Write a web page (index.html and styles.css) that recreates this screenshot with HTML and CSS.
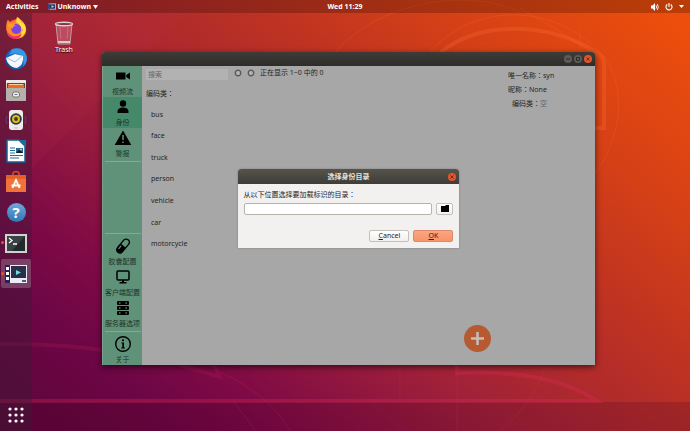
FILE: index.html
```html
<!DOCTYPE html>
<html lang="en">
  <head>
    <meta charset="UTF-8" />
    <meta name="viewport" content="width=device-width, initial-scale=1.0" />
    <title>Unknown</title>
    <link rel="stylesheet" href="styles.css" />
  </head>
  <body>
    <!-- Wallpaper -->
    <svg class="wallpaper" viewBox="0 0 690 431" preserveAspectRatio="none" aria-hidden="true">
      <defs>
        <linearGradient id="base" gradientUnits="userSpaceOnUse" x1="0" y1="431" x2="500" y2="-160">
          <stop offset="0" stop-color="#5a0538" />
          <stop offset="0.15" stop-color="#6d0645" />
          <stop offset="0.24" stop-color="#7e0a46" />
          <stop offset="0.42" stop-color="#a02139" />
          <stop offset="0.63" stop-color="#bd3222" />
          <stop offset="0.78" stop-color="#d54016" />
          <stop offset="1" stop-color="#f0500a" />
        </linearGradient>
      </defs>
      <rect width="690" height="431" fill="url(#base)" />
      <path d="M32 168L185 13H32z" fill="#c0304a" opacity="0.12" />
      <rect y="402" width="690" height="29" fill="#40001c" opacity="0.2" />
      <g fill="none" stroke="#ff7a3a">
        <path d="M441 52C478 22 545 20 598 53Q604 56 604 64V128H595" stroke-width="4" opacity="0.24" />
        <path d="M336 52C380 0 470-12 520 12M430 52C470 5 550 0 600 52C628 82 624 140 590 180M520 8Q560 30 600 58M580 30V52" opacity="0.18" />
      </g>
      <g fill="none" stroke="#e02c58">
        <path d="M0 401H597C560 376 510 371 457 373V365" stroke-width="4" opacity="0.3" />
        <path d="M0 344Q60 344 102 350M180 365L220 377L214 365" stroke-width="4" opacity="0.15" />
        <path d="M220 372Q270 395 290 431M234 402L256 431M546 367Q532 405 500 431M457 373V431M400 366V402" opacity="0.2" />
      </g>
    </svg>

    <header class="topbar">
      <div class="topbar-left">
        <button type="button">Activities</button>
        <button type="button" class="app-menu">
          <svg width="8" height="8" viewBox="0 0 9 8">
            <rect x="0.5" y="0.5" width="8" height="6" fill="#28395b" stroke="#b8c4de" />
            <path d="M0 0h2v7H0z" fill="#46437e" />
            <path d="M4 2l3 1.500-3 1.500z" fill="#9fdde6" />
          </svg>
          Unknown
          <svg width="5" height="4" viewBox="0 0 5 4"><path d="M0 0h5L2.500 4z" fill="#fff" /></svg>
        </button>
      </div>
      <button type="button">Wed 11:29</button>
      <div class="topbar-right">
        <button type="button" aria-label="System">
          <svg width="8" height="8" viewBox="0 0 8 8" fill="none" stroke="#fff">
            <path d="M0 2.500h1.500L4 0v8L1.500 5.500H0z" fill="#fff" stroke="none" />
            <path d="M5 2.300q1.200 1.700 0 3.400M6.300 1q2 3 0 6" stroke-width="0.9" />
          </svg>
          <svg width="8" height="8" viewBox="0 0 8 8" fill="none" stroke="#fff">
            <path d="M2.300 1.500a3 3 0 1 0 3.400 0M4 0v4" stroke-width="1.100" />
          </svg>
          <svg width="5" height="3" viewBox="0 0 5 3"><path d="M0 0h5L2.500 3z" fill="#fff" /></svg>
        </button>
      </div>
    </header>

    <div class="workspace">
      <nav class="dock">
        <div class="launchers">
          <button type="button" aria-label="Firefox">
            <svg width="24" height="24" viewBox="0 0 24 24">
              <circle cx="12" cy="13" r="9.800" fill="#ff4a3c" />
              <path d="M3 15Q1 8 4 3.500Q5 6 7 6.500Q12 5 13 1Q19 4 21.500 10Q24 17 18 21.500Q9 25 4 19z" fill="#ff8a25" />
              <path d="M13.500 1Q16 3 17.500 6Q22 8 21.800 14Q20.500 21 13 22Q19 18 17 12Q15 7 12 6z" fill="#ffe13c" />
              <path d="M2.500 14Q6 22 14 20Q20 17 18 12Q19 24 10 23Q4 22 2.500 14z" fill="#f22b72" />
              <circle cx="12.300" cy="13" r="5" fill="#7b44e0" />
              <path d="M4 8Q9 7 12 9.500Q9 10 9 12Q6 13 4 10z" fill="#ff9a22" />
            </svg>
          </button>
          <button type="button" aria-label="Thunderbird">
            <svg width="24" height="24" viewBox="0 0 24 24">
              <circle cx="12" cy="12" r="10.500" fill="#1764b5" />
              <path d="M8 2Q18-1 22 7Q25 14 19 20Q21 12 16 8Q12 5 5 8z" fill="#3398e6" />
              <path d="M2 11L11 7L19 9Q20 18 13 21Q4 21 2 11z" fill="#f4f7fb" />
              <path d="M3 11L11 15L18 9" fill="none" stroke="#a9bed5" />
              <path d="M2 14Q4 22 13 22Q5 19 2 14z" fill="#164b91" />
            </svg>
          </button>
          <button type="button" aria-label="Files">
            <svg width="24" height="24" viewBox="0 0 24 24">
              <rect x="2" y="2" width="20" height="21" rx="2" fill="#c9c7c3" />
              <rect x="2" y="2" width="20" height="4" rx="1" fill="#eceae6" />
              <path d="M3 5h18v6H3z" fill="#5a4c44" />
              <path d="M4 6h16v5H4z" fill="#ef6c27" />
              <path d="M5 6h14v1H5z" fill="#ffd0a6" />
              <rect x="2" y="10" width="20" height="13" rx="1" fill="#b4b1ad" />
              <rect x="8.500" y="14" width="7" height="5" rx="2" fill="#eee" stroke="#77736e" />
              <path d="M10.500 16.500h3" stroke="#777" />
            </svg>
          </button>
          <button type="button" aria-label="Rhythmbox">
            <svg width="24" height="24" viewBox="0 0 24 24">
              <path d="M3 8q-2 4 0 8M21 8q2 4 0 8" fill="none" stroke="#5866a9" stroke-opacity="0.5" />
              <rect x="5" y="2" width="14" height="20" rx="3" fill="#ececea" />
              <circle cx="12" cy="11" r="5.800" fill="#31343b" />
              <circle cx="12" cy="11" r="4" fill="#d7bc22" />
              <circle cx="12" cy="11" r="1.900" fill="#3c3b2c" />
              <path d="M10 20h4" stroke="#bbb" />
            </svg>
          </button>
          <button type="button" aria-label="LibreOffice Writer">
            <svg width="24" height="24" viewBox="0 0 24 24">
              <path d="M3 1h12l6 6v16H3z" fill="#fff" stroke="#126294" stroke-width="1.500" />
              <path d="M15 1h7v7z" fill="#176fa5" />
              <path d="M6 9h5M6 11.500h5M6 14h5M6 16.500h13M6 19h9" stroke="#23709e" />
              <rect x="12" y="9" width="7" height="5" fill="#266d9b" />
              <path d="M12 14l3-3 2 1 2 2z" fill="#101b24" />
              <circle cx="17" cy="10.500" r="1" fill="#f7d355" />
            </svg>
          </button>
          <button type="button" aria-label="Ubuntu Software">
            <svg width="24" height="24" viewBox="0 0 24 24">
              <path d="M9 6V3q3-3 6 0v3" fill="none" stroke="#d25720" stroke-width="1.500" />
              <path d="M2 5h20v17H2z" fill="#ef7338" />
              <path d="M2 5h20v4H2z" fill="#e46029" />
              <path d="M8.500 18L12 10L15.500 18M7.500 15.500h9" fill="none" stroke="#fff" stroke-width="1.800" />
            </svg>
          </button>
          <button type="button" aria-label="Help" class="help-icon">?</button>
          <button type="button" aria-label="Terminal" class="running">
            <svg width="24" height="24" viewBox="0 0 24 24">
              <rect x="1" y="3" width="22" height="19" fill="#d2d1cf" />
              <rect x="3" y="5" width="18" height="15" fill="#22292b" />
              <path d="M3 5h18L8 20H3z" fill="#3b4244" />
              <path d="M5 7l3 2.500L5 12M9 13h4" fill="none" stroke="#fff" stroke-width="1.300" />
            </svg>
          </button>
          <button type="button" aria-label="Unknown" class="running active">
            <svg width="24" height="24" viewBox="0 0 24 24">
              <rect x="1" y="3" width="22" height="18" fill="#ececf4" />
              <rect x="1" y="3" width="5" height="18" fill="#2c1e5d" />
              <path d="M2 5h3v3H2zM2 10h3v3H2zM2 15h3v3H2z" fill="#fff" />
              <rect x="7" y="4" width="15" height="12" fill="#283146" />
              <path d="M12 8l5 2.500-5 2.500z" fill="#72dbe1" />
              <path d="M18 18h4v2h-4z" fill="#5b5296" />
            </svg>
          </button>
        </div>
        <button type="button" class="show-apps" aria-label="Show Applications">
          <svg width="16" height="16" viewBox="0 0 16 16" fill="#fff">
            <circle cx="2" cy="2" r="1.600" /><circle cx="8" cy="2" r="1.600" /><circle cx="14" cy="2" r="1.600" />
            <circle cx="2" cy="8" r="1.600" /><circle cx="8" cy="8" r="1.600" /><circle cx="14" cy="8" r="1.600" />
            <circle cx="2" cy="14" r="1.600" /><circle cx="8" cy="14" r="1.600" /><circle cx="14" cy="14" r="1.600" />
          </svg>
        </button>
      </nav>

      <main class="desktop">
        <button type="button" class="trash">
          <svg width="20" height="24" viewBox="0 0 20 24">
            <path d="M2 3h16l-2 20H4z" fill="#cd667c" fill-opacity="0.6" stroke="#b99da1" />
            <path d="M4 20h12v2H4z" fill="#d4ceca" />
            <ellipse cx="10" cy="3" rx="8.500" ry="1.800" fill="#8b3346" stroke="#d9d5d1" stroke-width="1.400" />
            <path d="M6 6l1 12M14 6l-1 12" stroke="#e29aa7" stroke-opacity="0.4" />
          </svg>
          Trash
        </button>

        <section class="window">
          <div class="titlebar">
            <button type="button" class="win-btn" aria-label="Minimize">
              <svg viewBox="0 0 8 8"><path d="M2 4h4" /></svg>
            </button>
            <button type="button" class="win-btn" aria-label="Maximize">
              <svg viewBox="0 0 8 8"><path d="M2.500 2.500h3v3h-3z" /></svg>
            </button>
            <button type="button" class="win-btn close" aria-label="Close">
              <svg viewBox="0 0 8 8"><path d="M2.500 2.500l3 3M5.500 2.500l-3 3" /></svg>
            </button>
          </div>

          <div class="window-body">
            <nav class="sidebar">
              <button type="button">
                <svg width="18" height="18" viewBox="0 0 18 18"><path d="M2 5.500h9.500v7H2zM12.300 8l3.700-2.500v7L12.300 10z" /></svg>
                视频流
              </button>
              <button type="button" class="selected">
                <svg width="18" height="18" viewBox="0 0 18 18"><circle cx="9" cy="5.500" r="3.200" /><path d="M3.500 15v-2q.5-3.500 5.500-3.500t5.500 3.500v2z" /></svg>
                身份
              </button>
              <button type="button">
                <svg width="18" height="18" viewBox="0 0 18 18"><path d="M9 1.500L17.300 16H.7z" /><path d="M9 6v5M9 12.500v1.500" stroke="#5f9279" stroke-width="1.500" /></svg>
                警报
              </button>
              <hr />
              <div class="spacer"></div>
              <hr />
              <button type="button">
                <svg width="18" height="18" viewBox="0 0 18 18"><g transform="rotate(40 9 9)"><rect x="5.800" y="1" width="6.400" height="16" rx="3.200" fill="none" stroke="#000" stroke-width="1.300" /><path d="M5.800 8.500h6.400V14a3.200 3.200 0 0 1-6.400 0z" /><path d="M7.500 10v4" stroke="#7ca390" /></g></svg>
                胶囊配置
              </button>
              <button type="button">
                <svg width="18" height="18" viewBox="0 0 18 18"><rect x="3" y="3" width="12" height="9" rx="1" fill="none" stroke="#000" stroke-width="1.500" /><path d="M8 12h2v2h2.500v1.500h-7V14H8z" /></svg>
                客户端配置
              </button>
              <button type="button">
                <svg width="18" height="18" viewBox="0 0 18 18"><rect x="3" y="2" width="12" height="4" rx="1" /><rect x="3" y="7" width="12" height="4" rx="1" /><rect x="3" y="12" width="12" height="4" rx="1" /><path d="M5 4h1.500M11.500 4H13M5 9h1.500M11.500 9H13M5 14h1.500M11.500 14H13" stroke="#8ab29e" /></svg>
                服务器选项
              </button>
              <hr />
              <button type="button">
                <svg width="18" height="18" viewBox="0 0 18 18"><circle cx="9" cy="9" r="7.300" fill="none" stroke="#000" stroke-width="1.400" /><circle cx="9" cy="5.300" r="1.100" /><path d="M7.500 7.500H10v5h1v1H7.300v-1h1v-4h-.8z" /></svg>
                关于
              </button>
            </nav>

            <aside class="filters">
              <input type="search" placeholder="搜索" aria-label="搜索" />
              <h2>编码类：</h2>
              <ul>
                <li>bus</li>
                <li>face</li>
                <li>truck</li>
                <li>person</li>
                <li>vehicle</li>
                <li>car</li>
                <li>motorcycle</li>
              </ul>
            </aside>

            <section class="results">
              <div class="pager">
                <button type="button" aria-label="上一页">
                  <svg width="8" height="8" viewBox="0 0 8 8"><circle cx="4" cy="4" r="2.800" fill="none" stroke="#555" stroke-width="1.200" /><path d="M5 2.500L3 4l2 1.500z" fill="#bbb" /></svg>
                </button>
                <button type="button" aria-label="下一页">
                  <svg width="8" height="8" viewBox="0 0 8 8"><circle cx="4" cy="4" r="2.800" fill="none" stroke="#555" stroke-width="1.200" /><path d="M3 2.500L5 4 3 5.500z" fill="#bbb" /></svg>
                </button>
                <span>正在显示 1~0 中的 0</span>
              </div>
              <button type="button" class="add" aria-label="添加">
                <svg width="27" height="27" viewBox="0 0 27 27"><path d="M13.500 7v13M7 13.500h13" stroke="#c4c0bc" stroke-width="2.500" /></svg>
              </button>
            </section>

            <aside class="details">
              <p>唯一名称：syn</p>
              <p>昵称：None</p>
              <p class="nested">编码类：<span>空</span></p>
            </aside>
          </div>

          <div class="overlay">
            <form class="dialog" role="dialog" aria-labelledby="dialogTitle">
              <div class="dialog-title">
                <h1 id="dialogTitle">选择身份目录</h1>
                <button type="button" class="win-btn close" aria-label="Close">
                  <svg viewBox="0 0 8 8"><path d="M2.500 2.500l3 3M5.500 2.500l-3 3" /></svg>
                </button>
              </div>
              <div class="dialog-body">
                <label for="directory">从以下位置选择要加载标识的目录：</label>
                <div class="path-row">
                  <input type="text" id="directory" name="directory" />
                  <button type="button" class="btn browse" aria-label="Browse">
                    <svg width="8" height="8" viewBox="0 0 8 8"><path d="M0 1h4l1-1h3v7H0z" /></svg>
                  </button>
                </div>
                <div class="actions">
                  <button type="button" class="btn"><span><u>C</u>ancel</span></button>
                  <button type="submit" class="btn primary"><span><u>O</u>K</span></button>
                </div>
              </div>
            </form>
          </div>
        </section>
      </main>
    </div>
  </body>
</html>
```

FILE: styles.css
```css
* {
  box-sizing: border-box;
}

body {
  margin: 0;
  min-height: 100vh;
  display: flex;
  flex-direction: column;
  font-family: "Noto Sans", "Noto Sans CJK JP", sans-serif;
  font-size: 7px;
  line-height: 10px;
  color: #262626;
  background: #78063f;
}

button,
input {
  font: inherit;
  color: inherit;
}

button {
  border: none;
  background: none;
  padding: 0;
}

svg {
  display: block;
  flex: none;
}

h1,
h2,
p,
ul {
  margin: 0;
  padding: 0;
  font-size: 7px;
}

.wallpaper {
  position: absolute;
  inset: 0;
  width: 100%;
  height: 100%;
  z-index: -1;
}

/* Top bar */
.topbar {
  height: 13px;
  padding: 0 6px;
  display: grid;
  grid-template-columns: 1fr auto 1fr;
  align-items: center;
  background: rgba(0, 0, 0, 0.22);
  color: #fff;
  font-weight: 700;
}

.topbar-left,
.topbar-right,
.topbar button {
  display: flex;
  align-items: center;
}

.topbar-left {
  gap: 9px;
}

.topbar .app-menu {
  gap: 2px;
}

.topbar-right {
  justify-content: flex-end;
}

.topbar-right button {
  gap: 6px;
}

.workspace {
  flex: 1;
  display: flex;
}

/* Dock */
.dock {
  width: 32px;
  display: flex;
  flex-direction: column;
  justify-content: space-between;
  background: rgba(55, 30, 55, 0.38);
}

.launchers {
  display: grid;
  grid-auto-rows: 1fr;
  height: 276px;
}

.launchers button {
  margin: 1px;
  display: flex;
  align-items: center;
  justify-content: center;
  border-radius: 2px;
}

.launchers .help-icon {
  width: 19px;
  height: 19px;
  place-self: center;
  border-radius: 50%;
  background: linear-gradient(#71a9da, #2f75b4);
  color: #fff;
  font-size: 15px;
  font-weight: 700;
}

.launchers .running {
  position: relative;
}

.launchers .running::before {
  content: "";
  position: absolute;
  left: 0;
  width: 3px;
  height: 3px;
  border-radius: 50%;
  background: #e95420;
}

.launchers .active {
  background: rgba(255, 255, 255, 0.2);
}

.show-apps {
  height: 32px;
  display: flex;
  align-items: center;
  justify-content: center;
}

/* Desktop */
.desktop {
  flex: 1;
  position: relative;
}

.trash {
  position: absolute;
  left: 20px;
  top: 8px;
  width: 24px;
  display: flex;
  flex-direction: column;
  align-items: center;
  color: #fff;
  text-shadow: 0 1px 1px #000;
}

.window {
  position: absolute;
  inset: 39px 95px 66px 70px;
  display: flex;
  flex-direction: column;
  border-radius: 3px 3px 0 0;
  background: #a7a7a7;
  box-shadow: 0 2px 6px rgba(0, 0, 0, 0.6);
}

.titlebar {
  height: 14px;
  padding: 0 3px;
  display: flex;
  align-items: center;
  justify-content: flex-end;
  gap: 2px;
  border-radius: 3px 3px 0 0;
  background: linear-gradient(#3d3c38, #2d2c29);
}

.win-btn {
  width: 8px;
  height: 8px;
  border-radius: 50%;
  background: #5c5b56;
}

.win-btn svg {
  fill: none;
  stroke: #2d2c29;
}

.win-btn.close {
  background: #e2552c;
}

.win-btn.close svg {
  stroke: #7a2a14;
}

.window-body {
  flex: 1;
  display: flex;
}

/* Sidebar */
.sidebar {
  width: 40px;
  display: flex;
  flex-direction: column;
  background: #5f9279;
  border-left: 1px solid #78a08c;
}

.sidebar button {
  height: 31px;
  display: flex;
  flex-direction: column;
  align-items: center;
  justify-content: space-between;
  padding: 1px 0 0;
  color: #1f3329;
  white-space: nowrap;
}

.sidebar .selected {
  background: #45896a;
}

.sidebar hr {
  width: 36px;
  height: 1px;
  margin: 2px auto;
  border: none;
  background: #8aa698;
}

.spacer {
  flex: 1;
}

/* Filters */
.filters {
  width: 90px;
  padding: 3px 4px 0;
}

.filters input {
  display: block;
  width: 100%;
  height: 11px;
  padding: 0 2px;
  border: none;
  background: #b2b2b2;
}

.filters input::placeholder {
  color: #666;
}

.filters h2 {
  margin: 9px 0 5px;
  font-weight: 400;
}

.filters ul {
  display: grid;
  grid-auto-rows: 1fr;
  height: 151px;
  list-style: none;
}

.filters li {
  display: flex;
  align-items: center;
  padding-left: 5px;
}

/* Results */
.results {
  flex: 1;
  padding: 2px 13px 13px 2px;
  display: flex;
  flex-direction: column;
  justify-content: space-between;
}

.pager {
  display: flex;
  align-items: center;
  gap: 5px;
}

.add {
  align-self: flex-end;
  border-radius: 50%;
  background: #b75a32;
}

.details {
  width: 91px;
  padding: 5px 4px;
  display: flex;
  flex-direction: column;
  gap: 4px;
}

.details .nested {
  padding-left: 4px;
}

.details span {
  color: #666;
}

/* Dialog */
.overlay {
  position: absolute;
  inset: 0;
  display: grid;
  place-items: center;
}

.dialog {
  width: 45%;
  border-radius: 3px 3px 0 0;
  background: #f2f1f0;
  box-shadow: 0 0 2px rgba(0, 0, 0, 0.3);
}

.dialog-title {
  height: 15px;
  padding: 0 3px;
  display: grid;
  grid-template-columns: 8px 1fr 8px;
  align-items: center;
  border-radius: 3px 3px 0 0;
  background: linear-gradient(#55534b, #3e3d39);
  color: #e4e1da;
}

.dialog-title h1 {
  grid-column: 2;
  text-align: center;
  font-weight: 700;
}

.dialog-body {
  padding: 6px;
  display: flex;
  flex-direction: column;
}

.path-row {
  display: flex;
  gap: 4px;
  margin: 3px 0 15px;
}

.path-row input {
  flex: 1;
  min-width: 0;
  height: 12px;
  padding: 0 3px;
  border: 1px solid #b6b2ac;
  border-radius: 2px;
  background: #fff;
}

.btn {
  width: 40px;
  height: 12px;
  display: flex;
  align-items: center;
  justify-content: center;
  border: 1px solid #c4c0bb;
  border-radius: 2px;
  background: linear-gradient(#fff, #f1f0ee);
}

.browse {
  width: 17px;
}

.primary {
  border-color: #d98a6a;
  background: linear-gradient(#fba583, #f79469);
}

.actions {
  display: flex;
  justify-content: flex-end;
  gap: 4px;
}
```
